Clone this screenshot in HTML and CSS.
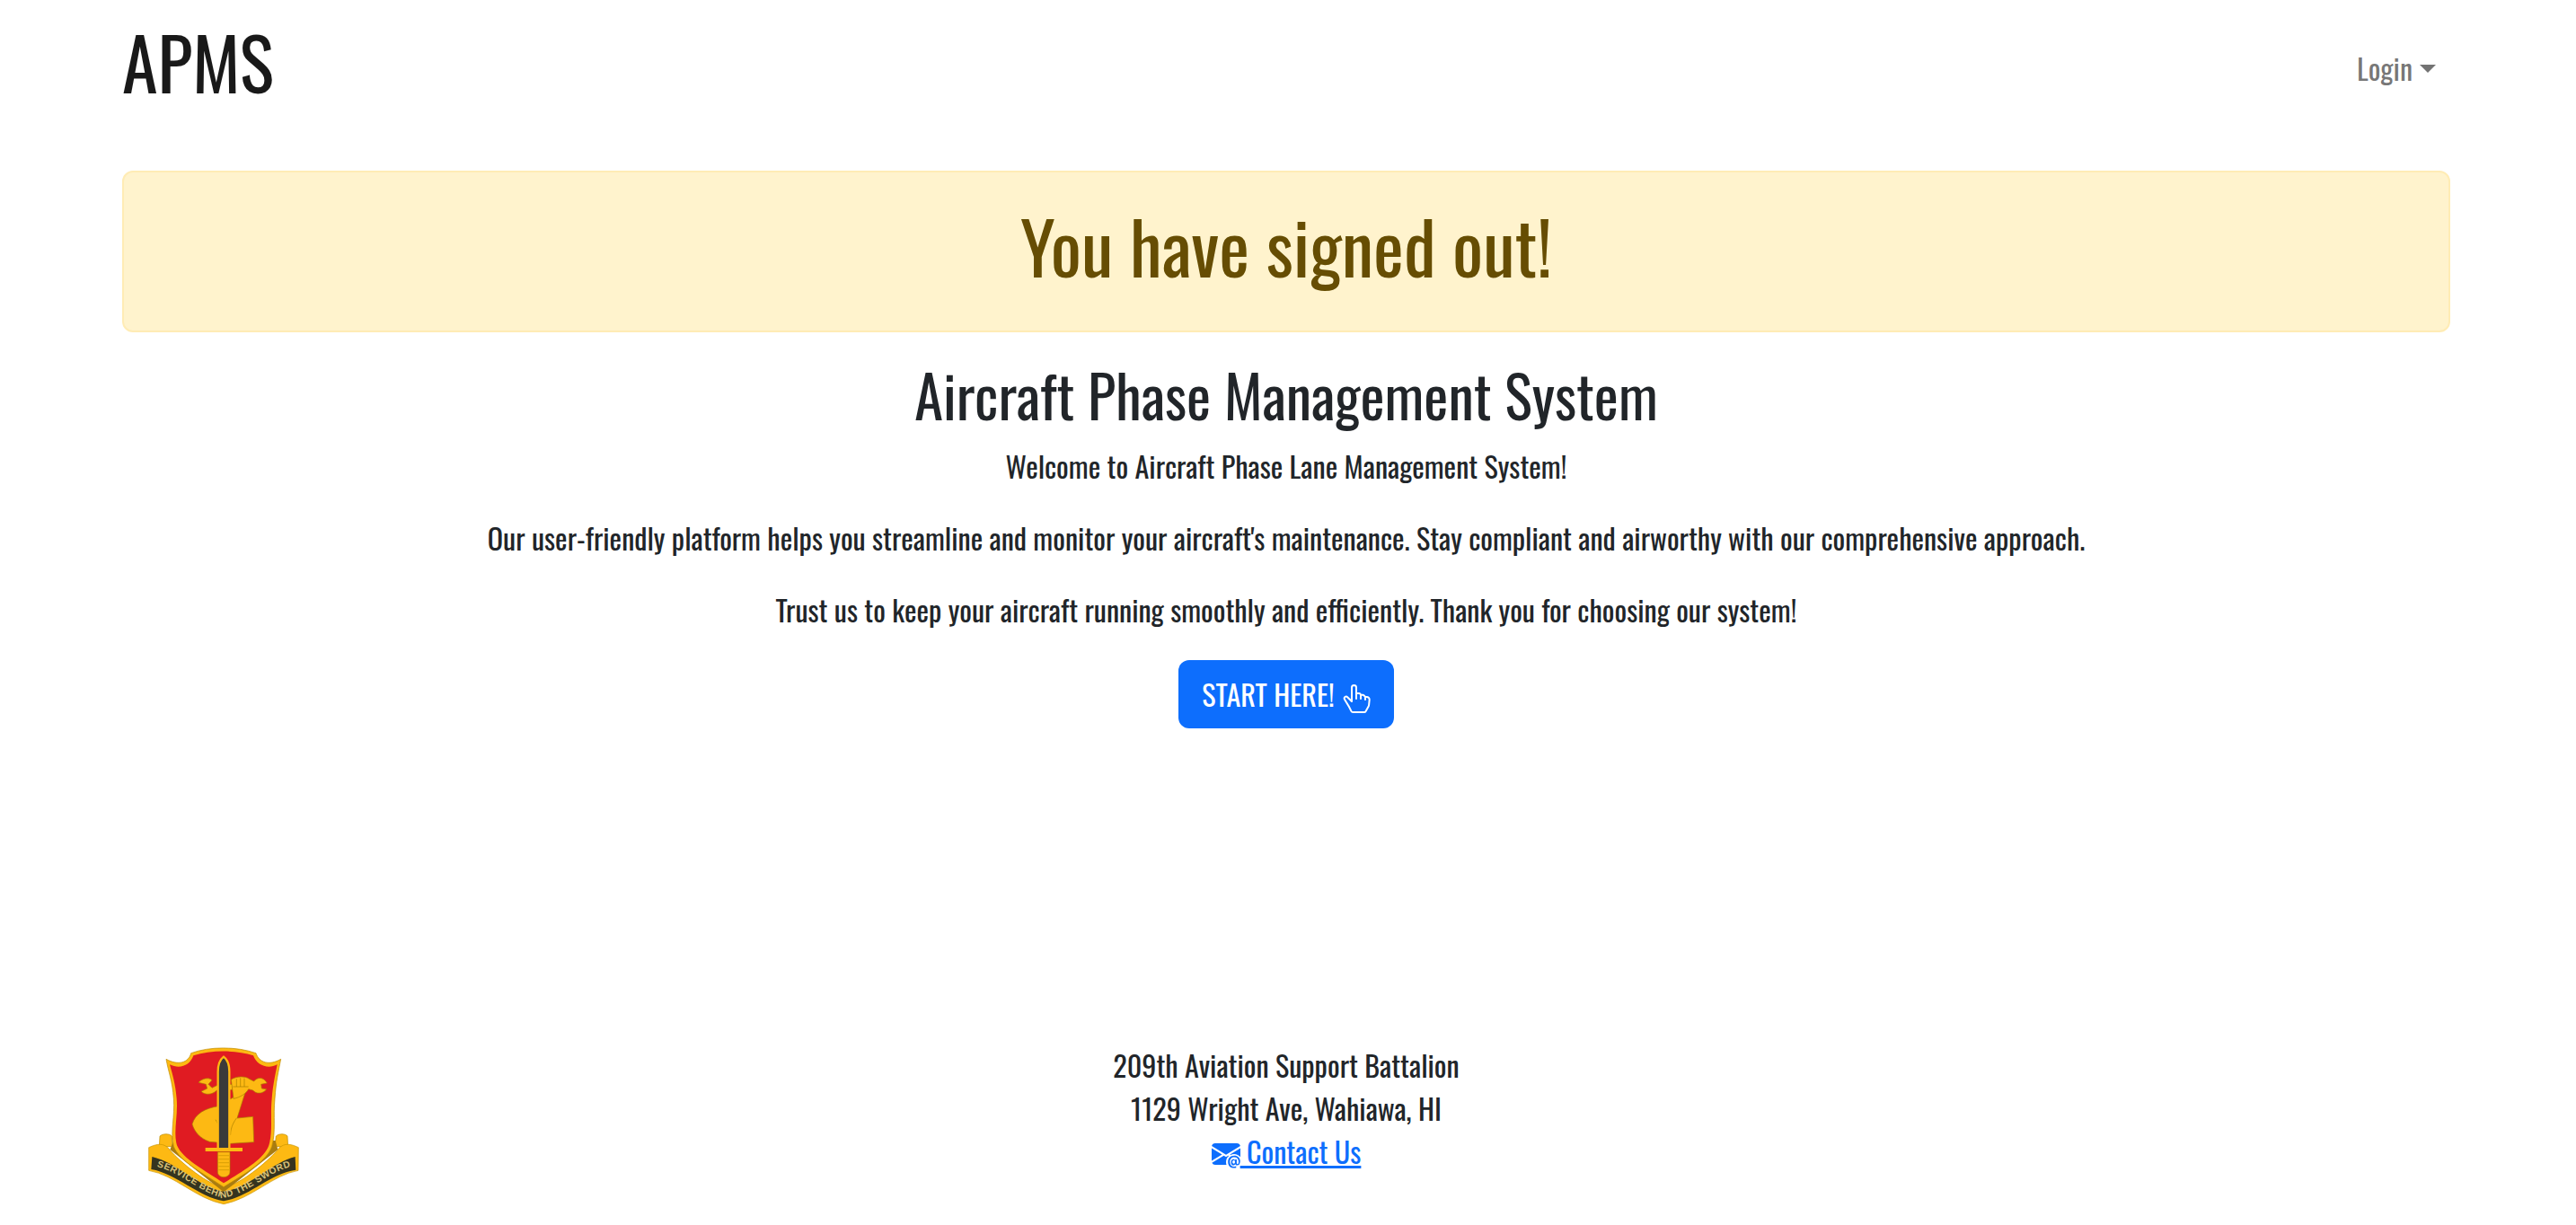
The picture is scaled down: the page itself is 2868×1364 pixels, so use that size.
FILE: index.html
```html
<!DOCTYPE html>
<html lang="en">
<head>
<meta charset="utf-8">
<title>APMS</title>
<link rel="stylesheet" href="styles.css">
</head>
<body>
<div class="page">
  <header class="navbar">
    <a class="brand" href="#">APMS</a>
    <a class="login" href="#">Login<span class="caret"></span></a>
  </header>
  <main class="main">
    <div class="alert"><h1 class="alert-title">You have signed out!</h1></div>
    <h2 class="title">Aircraft Phase Management System</h2>
    <p class="lead">Welcome to Aircraft Phase Lane Management System!</p>
    <p class="lead">Our user-friendly platform helps you streamline and monitor your aircraft's maintenance. Stay compliant and airworthy with our comprehensive approach.</p>
    <p class="lead">Trust us to keep your aircraft running smoothly and efficiently. Thank you for choosing our system!</p>
    <a class="btn" href="#">START HERE!
      <svg class="btn-icon" viewBox="0 0 16 16" fill="currentColor"><path d="M6.75 1a.75.75 0 0 1 .75.75V8a.5.5 0 0 0 1 0V5.467l.086-.004c.317-.012.637-.008.816.027.134.027.294.096.448.182.077.042.15.147.15.314V8a.5.5 0 0 0 1 0V6.435l.106-.01c.316-.024.584-.01.708.04.118.046.3.207.486.43.081.096.15.19.2.259V8.5a.5.5 0 1 0 1 0v-1h.342a1 1 0 0 1 .995 1.1l-.271 2.715a2.5 2.5 0 0 1-.317.991l-1.395 2.442a.5.5 0 0 1-.434.252H6.118a.5.5 0 0 1-.447-.276l-1.232-2.465-2.512-4.185a.517.517 0 0 1 .809-.631l2.41 2.41A.5.5 0 0 0 6 9.5V1.75A.75.75 0 0 1 6.75 1zM8.5 4.466V1.75a1.75 1.75 0 1 0-3.5 0v6.543L3.443 6.736A1.517 1.517 0 0 0 1.07 8.588l2.491 4.153 1.215 2.43A1.5 1.5 0 0 0 6.118 16h6.302a1.5 1.5 0 0 0 1.302-.756l1.395-2.441a3.5 3.5 0 0 0 .444-1.389l.271-2.715a2 2 0 0 0-1.99-2.199h-.581a5.114 5.114 0 0 0-.195-.248c-.191-.229-.51-.568-.88-.716-.364-.146-.846-.132-1.158-.108l-.132.012a1.26 1.26 0 0 0-.56-.642 2.632 2.632 0 0 0-.738-.288c-.31-.062-.739-.058-1.05-.046l-.048.002z"/></svg>
    </a>
  </main>
  <footer class="footer">
    <svg class="crest" viewBox="0 0 900 702">
      <path fill="#fdb913" stroke="#b98a00" stroke-width="2" d="M234 405C244 396 266 396 274 405L276 440L232 440Z"/>
      <path fill="#fdb913" stroke="#b98a00" stroke-width="2" d="M622 405C632 396 652 396 660 405L662 440L618 440Z"/>
      <path fill="#fdb913" stroke="#c79400" stroke-width="2" d="M197 443C225 430 245 428 262 445C290 480 380 560 447 578C515 560 605 480 632 445C650 428 670 430 697 443L696 520C610 535 540 615 447 632C355 615 285 535 197 520Z"/>
      <path fill="#a97c10" d="M268 450L447 592L628 450L620 420L280 420Z"/>
      <path fill="#fdb913" stroke="#b98a00" stroke-width="2" d="M338 128C400 105 490 105 555 128C565 160 600 170 638 148C630 190 622 220 618 280C612 340 622 390 608 440C590 490 520 530 447 575C380 530 300 490 280 440C268 390 285 340 280 280C276 220 262 190 255 148C295 170 330 160 338 128Z"/>
      <path fill="#e01b22" d="M346 136C405 117 488 117 546 136C558 170 596 182 626 166C620 200 612 230 608 280C602 340 612 390 598 436C582 482 515 520 447 562C385 520 310 482 291 436C278 390 295 340 290 280C286 230 276 200 267 166C300 182 335 170 346 136Z"/>
      <path fill="#fdb913" stroke="#a87d00" stroke-width="2" d="M480 275C495 268 510 258 522 250L492 345L545 340L548 425L470 430L400 424C368 412 350 392 342 365C352 330 385 312 430 305Z"/>
      <path fill="#fdb913" stroke="#a87d00" stroke-width="2" d="M363 226C375 212 398 208 408 218L396 232L408 244L424 236L478 232L476 250L424 252C412 266 385 270 372 256L392 246L388 232Z"/>
      <path fill="#fdb913" stroke="#a87d00" stroke-width="2" d="M472 216C490 204 520 204 532 214L548 222C560 206 582 208 592 228L572 232L574 246L590 248C580 264 555 266 545 252L530 248C522 262 505 275 480 280Z"/>
      <path fill="none" stroke="#a87d00" stroke-width="2" d="M420 350C440 385 440 400 470 400M490 345C475 365 470 385 470 400M478 240H530M490 214V240M503 211V240M516 212V240"/>
      <path fill="#3a3a3a" stroke="#fdb913" stroke-width="7" d="M447 140C460 150 466 170 466 190L466 448L428 448L428 190C428 170 434 150 447 140Z"/>
      <rect x="386" y="444" width="124" height="12" fill="#fdb913"/>
      <path fill="#fdb913" stroke="#a87d00" stroke-width="2" d="M427 458H468V525C468 535 458 542 447 542C436 542 427 535 427 525Z"/>
      <path fill="none" stroke="#c79400" stroke-width="2" d="M430 470H465M430 482H465M430 494H465M430 506H465M430 518H465"/>
      <path fill="#35341f" d="M208 474C290 492 370 580 447 590C530 580 610 492 686 474L688 518C600 530 530 610 447 622C365 610 290 530 205 516Z"/>
      <path id="crest-arc" fill="none" d="M214 505C300 520 370 598 447 611C530 598 600 520 682 505"/>
      <text class="crest-text"><textPath href="#crest-arc" startOffset="50%" text-anchor="middle">SERVICE BEHIND THE SWORD</textPath></text>
    </svg>
    <address class="address">
      <div>209th Aviation Support Battalion</div>
      <div>1129 Wright Ave, Wahiawa, HI</div>
      <a class="contact" href="#"><svg class="mail-icon" viewBox="0 0 16 16" fill="currentColor"><path d="M2 2A2 2 0 0 0 .05 3.555L8 8.414l7.95-4.859A2 2 0 0 0 14 2H2Zm-2 9.8V4.698l5.803 3.546L0 11.801Zm6.761-2.97-6.57 4.026A2 2 0 0 0 2 14h6.256A4.493 4.493 0 0 1 8 12.5a4.49 4.49 0 0 1 1.606-3.446l-.367-.225L8 9.586l-1.239-.757ZM16 9.671V4.697l-5.803 3.546.338.208A4.482 4.482 0 0 1 12.5 8c1.414 0 2.675.652 3.5 1.671Z"/><path d="M15.834 12.244c0 1.168-.577 2.025-1.587 2.025-.503 0-1.002-.228-1.12-.648h-.043c-.118.416-.543.643-1.015.643-.77 0-1.259-.542-1.259-1.434v-.529c0-.844.481-1.4 1.26-1.4.585 0 .87.333.953.63h.03v-.568h.905v2.19c0 .272.18.42.411.42.315 0 .639-.415.639-1.124v-.225c0-1.51-.98-2.48-2.368-2.48h-.04c-1.492 0-2.45 1.03-2.45 2.52v.213c0 1.569.988 2.494 2.457 2.494h.034c.39 0 .743-.06 1.004-.166v.792c-.26.113-.635.192-1.036.192h-.034c-1.986 0-3.46-1.222-3.46-3.346v-.21c0-1.987 1.395-3.367 3.455-3.367h.04c1.9 0 3.268 1.34 3.268 3.14Zm-4.24.264c0 .553.258.837.7.837.448 0 .687-.27.687-.837v-.245c0-.545-.25-.82-.687-.82-.433 0-.7.27-.7.82v.245Z"/></svg> Contact Us</a>
    </address>
    <div class="footer-spacer"></div>
  </footer>
</div>
</body>
</html>
```
FILE: styles.css
```css
* { box-sizing: border-box; }
html, body { margin: 0; padding: 0; }
body {
  font-family: "Oswald", "Liberation Sans", sans-serif;
  font-size: 32.16px;
  line-height: 48px;
  font-weight: 400;
  color: #212529;
  background: #fff;
}
.page {
  min-height: 100vh;
  display: flex;
  flex-direction: column;
  padding: 0 140px 0 136px;
}
.navbar {
  display: flex;
  justify-content: space-between;
  align-items: center;
  height: 150px;
}
.brand {
  font-size: 80.4px;
  line-height: 120px;
  color: rgba(0,0,0,.9);
  text-decoration: none;
  margin-top: -14px;
}
.login {
  display: flex;
  align-items: center;
  color: rgba(0,0,0,.55);
  text-decoration: none;
  margin-top: 2px;
  margin-right: 16px;
}
.caret {
  margin-left: 8px;
  border-top: 9px solid;
  border-left: 9px solid transparent;
  border-right: 9px solid transparent;
}
.main {
  display: flex;
  flex-direction: column;
  align-items: center;
  text-align: center;
  padding-top: 40px;
}
.alert {
  align-self: stretch;
  height: 180px;
  display: flex;
  align-items: center;
  justify-content: center;
  padding-bottom: 15px;
  background: #fff3cd;
  border: 2px solid #ffecb5;
  border-radius: 12px;
  color: #664d03;
}
.alert-title {
  margin: 0;
  font-size: 80.5px;
  line-height: 96px;
  font-weight: 400;
}
.title {
  margin: 29px 0 16px;
  font-size: 64.4px;
  line-height: 80px;
  font-weight: 400;
}
.lead { margin: 0 0 32px; }
.btn {
  display: flex;
  align-items: center;
  gap: 8px;
  height: 76px;
  padding: 0 26px;
  background: #0d6efd;
  color: #fff;
  border-radius: 12px;
  text-decoration: none;
}
.btn-icon { width: 32px; height: 32px; margin-top: 10px; }
.footer {
  margin-top: auto;
  display: grid;
  grid-template-columns: 300px 1fr 300px;
  align-items: end;
  margin-left: -36px;
  margin-right: -36px;
}
.crest { width: 300px; height: 234px; display: block; }
.crest-text { font-family: "Liberation Sans", sans-serif; font-size: 31px; font-weight: 700; fill: #d9c27a; letter-spacing: 1.5px; }
.address {
  font-style: normal;
  text-align: center;
  padding-bottom: 58px;
}
.contact { color: #0d6efd; }
.mail-icon { width: 32px; height: 32px; vertical-align: -5px; }
```
